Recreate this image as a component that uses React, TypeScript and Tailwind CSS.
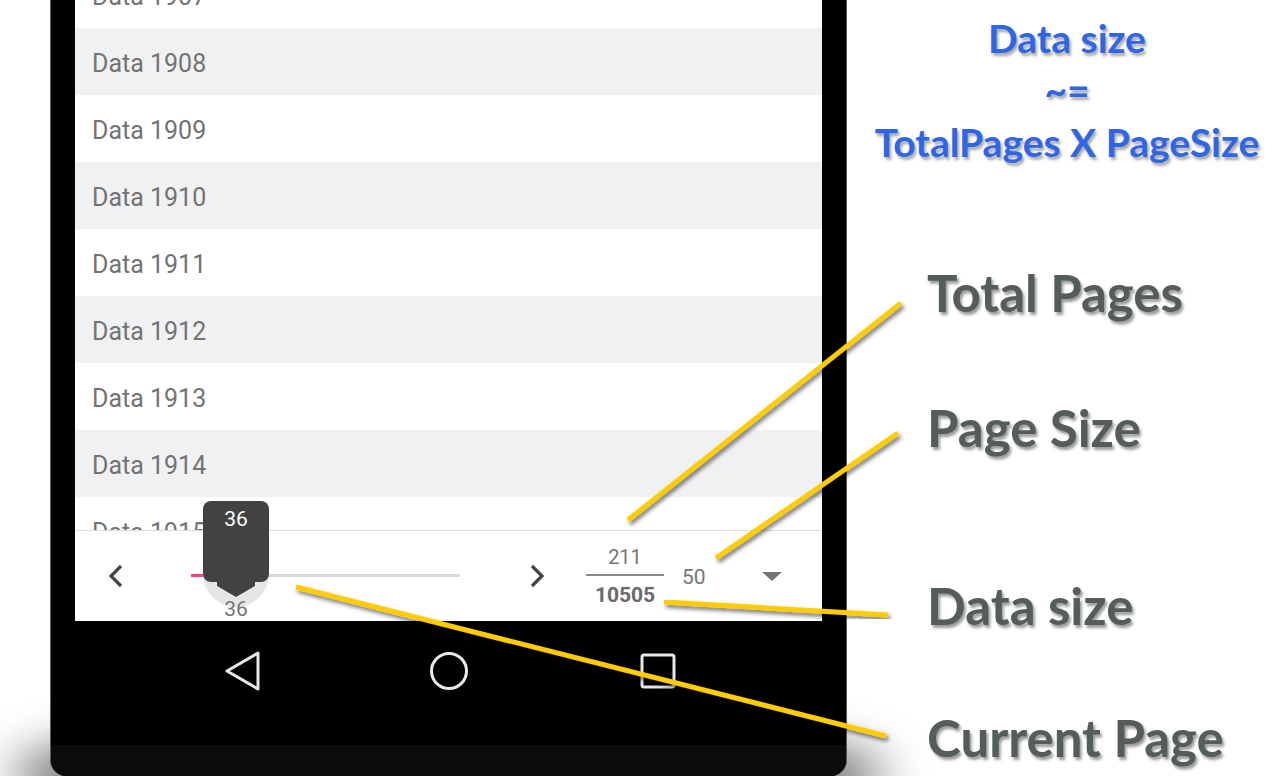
import React from "react";

const rows = [1907, 1908, 1909, 1910, 1911, 1912, 1913, 1914, 1915];

const pointers = [
  // total pages, page size, data size, current page
  { x1: 628, y1: 520, x2: 901, y2: 303 },
  { x1: 716, y1: 558, x2: 898, y2: 433 },
  { x1: 664, y1: 602, x2: 888, y2: 615 },
  { x1: 296, y1: 587, x2: 886, y2: 736 },
];

function Chevron({ dir }: { dir: "left" | "right" }) {
  return (
    <svg width="16" height="24" viewBox="0 0 16 24" className="shrink-0">
      <polyline
        points={dir === "left" ? "13,2 3,12 13,22" : "3,2 13,12 3,22"}
        fill="none"
        stroke="#444"
        strokeWidth="3.2"
      />
    </svg>
  );
}

function Slider() {
  return (
    <div className="relative ml-[67px] h-[24px] w-[269px] shrink-0">
      <div className="absolute left-0 top-[10px] h-[3px] w-full bg-[#d9d9d9]" />
      <div className="absolute left-0 top-[10px] h-[3px] w-[45px] bg-[#ff4081]" />
      <div className="absolute left-[12px] top-[-23px] h-[66px] w-[66px] rounded-full bg-[#e6e6e6]" />
      <div className="absolute left-[12px] top-[-63px] flex h-[81px] w-[66px] justify-center rounded-[8px] bg-[#424242] pt-[8px] text-[21px] leading-[21px] text-white">
        36
      </div>
      <svg
        width="38"
        height="16"
        viewBox="0 0 38 16"
        className="absolute left-[26px] top-[17px]"
      >
        <polygon points="0,0 38,0 38,5 19,16 0,5" fill="#424242" />
      </svg>
      <div className="absolute left-[45px] top-[35px] -translate-x-1/2 text-[21px] leading-[21px] text-[#757575]">
        36
      </div>
    </div>
  );
}

function Phone() {
  return (
    <div className="relative ml-[50px] w-[797px] shrink-0">
      <div className="absolute -left-[40px] -right-[40px] bottom-[-55px] h-[110px] rounded-[50%] bg-black/60 blur-[24px]" />
      <div className="relative flex h-[776px] flex-col overflow-hidden rounded-b-[16px] border-x border-[#5a5a5a] bg-black">
        <div className="mx-[24px] flex h-[621px] flex-col bg-white font-['Roboto',sans-serif]">
          <div className="flex-1 overflow-hidden">
            <div className="mt-[-39px]">
              {rows.map((n, i) => (
                <div
                  key={n}
                  className={`flex h-[67px] items-center px-[17px] pt-[4px] text-[25px] leading-[28px] text-[#737373] ${
                    i % 2 === 1 ? "bg-[#f0f1f3]" : "bg-white"
                  }`}
                >
                  Data {n}
                </div>
              ))}
            </div>
          </div>
          <div className="relative flex h-[91px] items-center border-t border-[#dcdcdc] bg-white">
            <div className="ml-[33px]">
              <Chevron dir="left" />
            </div>
            <Slider />
            <div className="ml-[69px]">
              <Chevron dir="right" />
            </div>
            <div className="ml-[41px] flex w-[78px] flex-col items-center">
              <span className="text-[20px] leading-[20px] text-[#757575]">211</span>
              <div className="mt-[7px] h-[2px] w-full bg-[#8c8c8c]" />
              <span className="mt-[9px] text-[21px] font-bold leading-[21px] text-[#6a6a6a]">
                10505
              </span>
            </div>
            <span className="ml-[18px] mt-[2px] text-[21px] leading-[21px] text-[#757575]">50</span>
            <svg width="20" height="9" viewBox="0 0 20 9" className="ml-auto mr-[40px]">
              <polygon points="0,0 20,0 10,9" fill="#757575" />
            </svg>
          </div>
        </div>
        <div className="flex h-[100px] items-center">
          <svg width="36" height="40" viewBox="0 0 36 40" className="ml-[174px]">
            <polygon
              points="33,2 33,38 2,20"
              fill="none"
              stroke="#e8e8e8"
              strokeWidth="3"
              strokeLinejoin="round"
            />
          </svg>
          <svg width="40" height="40" viewBox="0 0 40 40" className="ml-[168px]">
            <circle cx="20" cy="20" r="17.5" fill="none" stroke="#e8e8e8" strokeWidth="3" />
          </svg>
          <svg width="36" height="36" viewBox="0 0 36 36" className="ml-[171px]">
            <rect x="2" y="2" width="32" height="32" rx="2" fill="none" stroke="#e8e8e8" strokeWidth="3" />
          </svg>
        </div>
        <div className="h-[24px]" />
        <div className="h-[31px] bg-[#0b0b0b]" />
      </div>
    </div>
  );
}

const label =
  "ml-[80px] whitespace-nowrap text-[51px] font-bold leading-[50px] text-[#555d59] [text-shadow:2px_3px_3px_rgba(0,0,0,0.4)]";

export default function App() {
  return (
    <div className="relative flex h-[776px] w-[1272px] overflow-hidden bg-white font-['Lato',sans-serif]">
      <Phone />
      <div className="flex w-[425px] flex-col">
        <div className="ml-[15px] mt-[12px] flex flex-col items-center text-[39px] font-bold leading-[52px] text-[#2f66e8] [text-shadow:2px_3px_3px_rgba(0,0,0,0.35)]">
          <span>Data size</span>
          <span>~=</span>
          <span className="whitespace-nowrap">TotalPages X PageSize</span>
        </div>
        <div className={`${label} mt-[100px]`}>Total Pages</div>
        <div className={`${label} mt-[85px]`}>Page Size</div>
        <div className={`${label} mt-[128px]`}>Data size</div>
        <div className={`${label} mt-[82px]`}>Current Page</div>
      </div>
      <svg
        width="1272"
        height="776"
        viewBox="0 0 1272 776"
        className="pointer-events-none absolute left-0 top-0"
      >
        <defs>
          <filter id="lineShadow" x="-10%" y="-10%" width="120%" height="140%">
            <feDropShadow dx="2" dy="3" stdDeviation="2" floodColor="#000" floodOpacity="0.55" />
          </filter>
        </defs>
        {pointers.map((p, i) => (
          <line
            key={i}
            x1={p.x1}
            y1={p.y1}
            x2={p.x2}
            y2={p.y2}
            stroke="#ffcc00"
            strokeWidth="5"
            filter="url(#lineShadow)"
          />
        ))}
      </svg>
    </div>
  );
}
